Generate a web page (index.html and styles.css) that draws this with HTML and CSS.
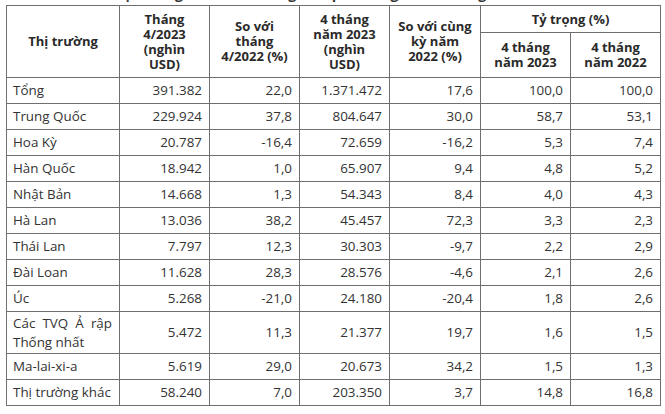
FILE: index.html
```html
<!DOCTYPE html>
<html lang="vi">
<head>
<meta charset="utf-8">
<title>Thị trường</title>
<link rel="stylesheet" href="styles.css">
</head>
<body>
<div class="caption"><span>Thị trường xuất khẩu hàng rau quả tháng 4 và 4 tháng năm 2023</span></div>
<table class="data">
  <colgroup>
    <col class="c1"><col class="c2"><col class="c3"><col class="c4"><col class="c5"><col class="c6"><col class="c7">
  </colgroup>
  <thead>
    <tr class="h1">
      <th rowspan="2">Thị trường</th>
      <th rowspan="2">Tháng<br>4/2023<br>(nghìn<br>USD)</th>
      <th rowspan="2">So với<br>tháng<br>4/2022 (%)</th>
      <th rowspan="2">4 tháng<br>năm 2023<br>(nghìn<br>USD)</th>
      <th rowspan="2">So với cùng<br>kỳ năm<br>2022 (%)</th>
      <th colspan="2">Tỷ trọng (%)</th>
    </tr>
    <tr class="h2">
      <th>4 tháng<br>năm 2023</th>
      <th>4 tháng<br>năm 2022</th>
    </tr>
  </thead>
  <tbody>
    <tr><td>Tổng</td><td>391.382</td><td>22,0</td><td>1.371.472</td><td>17,6</td><td>100,0</td><td>100,0</td></tr>
    <tr><td>Trung Quốc</td><td>229.924</td><td>37,8</td><td>804.647</td><td>30,0</td><td>58,7</td><td>53,1</td></tr>
    <tr><td>Hoa Kỳ</td><td>20.787</td><td>-16,4</td><td>72.659</td><td>-16,2</td><td>5,3</td><td>7,4</td></tr>
    <tr><td>Hàn Quốc</td><td>18.942</td><td>1,0</td><td>65.907</td><td>9,4</td><td>4,8</td><td>5,2</td></tr>
    <tr><td>Nhật Bản</td><td>14.668</td><td>1,3</td><td>54.343</td><td>8,4</td><td>4,0</td><td>4,3</td></tr>
    <tr><td>Hà Lan</td><td>13.036</td><td>38,2</td><td>45.457</td><td>72,3</td><td>3,3</td><td>2,3</td></tr>
    <tr><td>Thái Lan</td><td>7.797</td><td>12,3</td><td>30.303</td><td>-9,7</td><td>2,2</td><td>2,9</td></tr>
    <tr><td>Đài Loan</td><td>11.628</td><td>28,3</td><td>28.576</td><td>-4,6</td><td>2,1</td><td>2,6</td></tr>
    <tr><td>Úc</td><td>5.268</td><td>-21,0</td><td>24.180</td><td>-20,4</td><td>1,8</td><td>2,6</td></tr>
    <tr class="tall"><td class="just">Các TVQ Ả rập Thống nhất</td><td>5.472</td><td>11,3</td><td>21.377</td><td>19,7</td><td>1,6</td><td>1,5</td></tr>
    <tr><td>Ma-lai-xi-a</td><td>5.619</td><td>29,0</td><td>20.673</td><td>34,2</td><td>1,5</td><td>1,3</td></tr>
    <tr><td>Thị trường khác</td><td>58.240</td><td>7,0</td><td>203.350</td><td>3,7</td><td>14,8</td><td>16,8</td></tr>
  </tbody>
</table>
</body>
</html>
```
FILE: styles.css
```css
html, body {
  margin: 0;
  padding: 0;
  background: #ffffff;
}
body {
  padding: 0 6px;
  font-family: "Open Sans", "Liberation Sans", sans-serif;
  color: #333333;
}
.caption {
  height: 5px;
  overflow: hidden;
  text-align: center;
}
.caption span {
  display: block;
  font-weight: 700;
  font-size: 14px;
  line-height: 18px;
  margin-top: -15px;
  color: #333;
}
.data {
  border-collapse: collapse;
  table-layout: fixed;
  width: 654px;
  font-size: 13.4px;
}
.c1 { width: 113px; }
.c2 { width: 90px; }
.c3 { width: 90px; }
.c4 { width: 90px; }
.c5 { width: 91px; }
.c6 { width: 90px; }
.c7 { width: 90px; }
.data th, .data td {
  border: 1px solid #6f6f6f;
  padding: 0 6px;
}
.data th {
  font-weight: 700;
  font-size: 13px;
  color: #2a2a2a;
  line-height: 15px;
  text-align: center;
  vertical-align: middle;
}
.h1 { height: 27px; }
.h2 { height: 45px; }
.data td {
  height: 25px;
  line-height: 19px;
  text-align: right;
  vertical-align: middle;
  padding-right: 7px;
}
.data td:first-child {
  text-align: left;
  padding-left: 6px;
}
.tall td { height: 41px; }
.data td.just {
  text-align: justify;
}
```
